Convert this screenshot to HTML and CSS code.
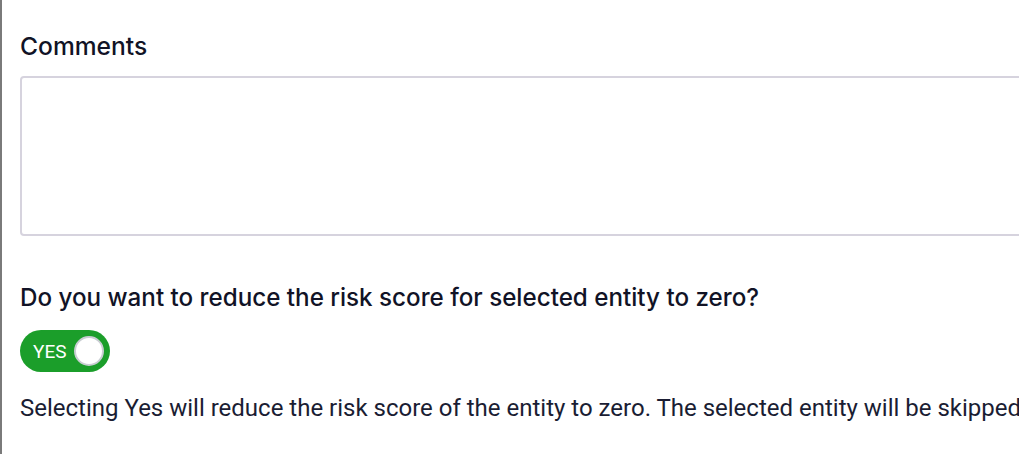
FILE: index.html
```html
<!DOCTYPE html>
<html>
<head>
<meta charset="utf-8">
<link rel="stylesheet" href="styles.css">
</head>
<body>
<div class="panel">
  <label class="field-label">Comments</label>
  <div class="textarea"></div>
  <h2 class="question">Do you want to reduce the risk score for selected entity to zero?</h2>
  <div class="toggle"><span class="toggle-text">YES</span><span class="knob"></span></div>
  <p class="help">Selecting Yes will reduce the risk score of the entity to zero. The selected entity will be skipped from future risk scoring.</p>
</div>
</body>
</html>
```
FILE: styles.css
```css
html, body {
  margin: 0;
  padding: 0;
  background: #fff;
  overflow: hidden;
}
body {
  width: 1019px;
  height: 454px;
}
.panel {
  box-sizing: border-box;
  height: 454px;
  border-left: 2px solid #7a7a7a;
  padding: 30px 0 0 18px;
  font-family: "Inter", "Roboto", sans-serif;
  color: #111326;
  white-space: nowrap;
  width: 1019px;
  overflow: hidden;
}
.field-label {
  display: block;
  font-size: 24.6px;
  font-weight: 500;
  line-height: 32px;
}
.textarea {
  margin-top: 14px;
  height: 160px;
  box-sizing: border-box;
  border: 2px solid #d6d3de;
  border-radius: 4px;
  width: 1100px;
}
.question {
  margin: 46px 0 0;
  font-size: 24.2px;
  font-weight: 500;
  line-height: 32px;
}
.toggle {
  margin-top: 16px;
  width: 90px;
  height: 42px;
  box-sizing: border-box;
  border-radius: 21px;
  background: #1b9e2a;
  display: flex;
  align-items: center;
  padding: 0 6px 0 13px;
  justify-content: space-between;
}
.toggle-text {
  font-family: "Roboto", sans-serif;
  color: #fff;
  font-size: 19px;
}
.knob {
  width: 30px;
  height: 30px;
  box-sizing: border-box;
  border-radius: 50%;
  background: #fff;
  border: 2px solid #c9cdd2;
}
.help {
  margin: 21px 0 0;
  font-family: "Roboto", sans-serif;
  font-size: 24px;
  line-height: 30px;
  color: #1a1d33;
}
```
